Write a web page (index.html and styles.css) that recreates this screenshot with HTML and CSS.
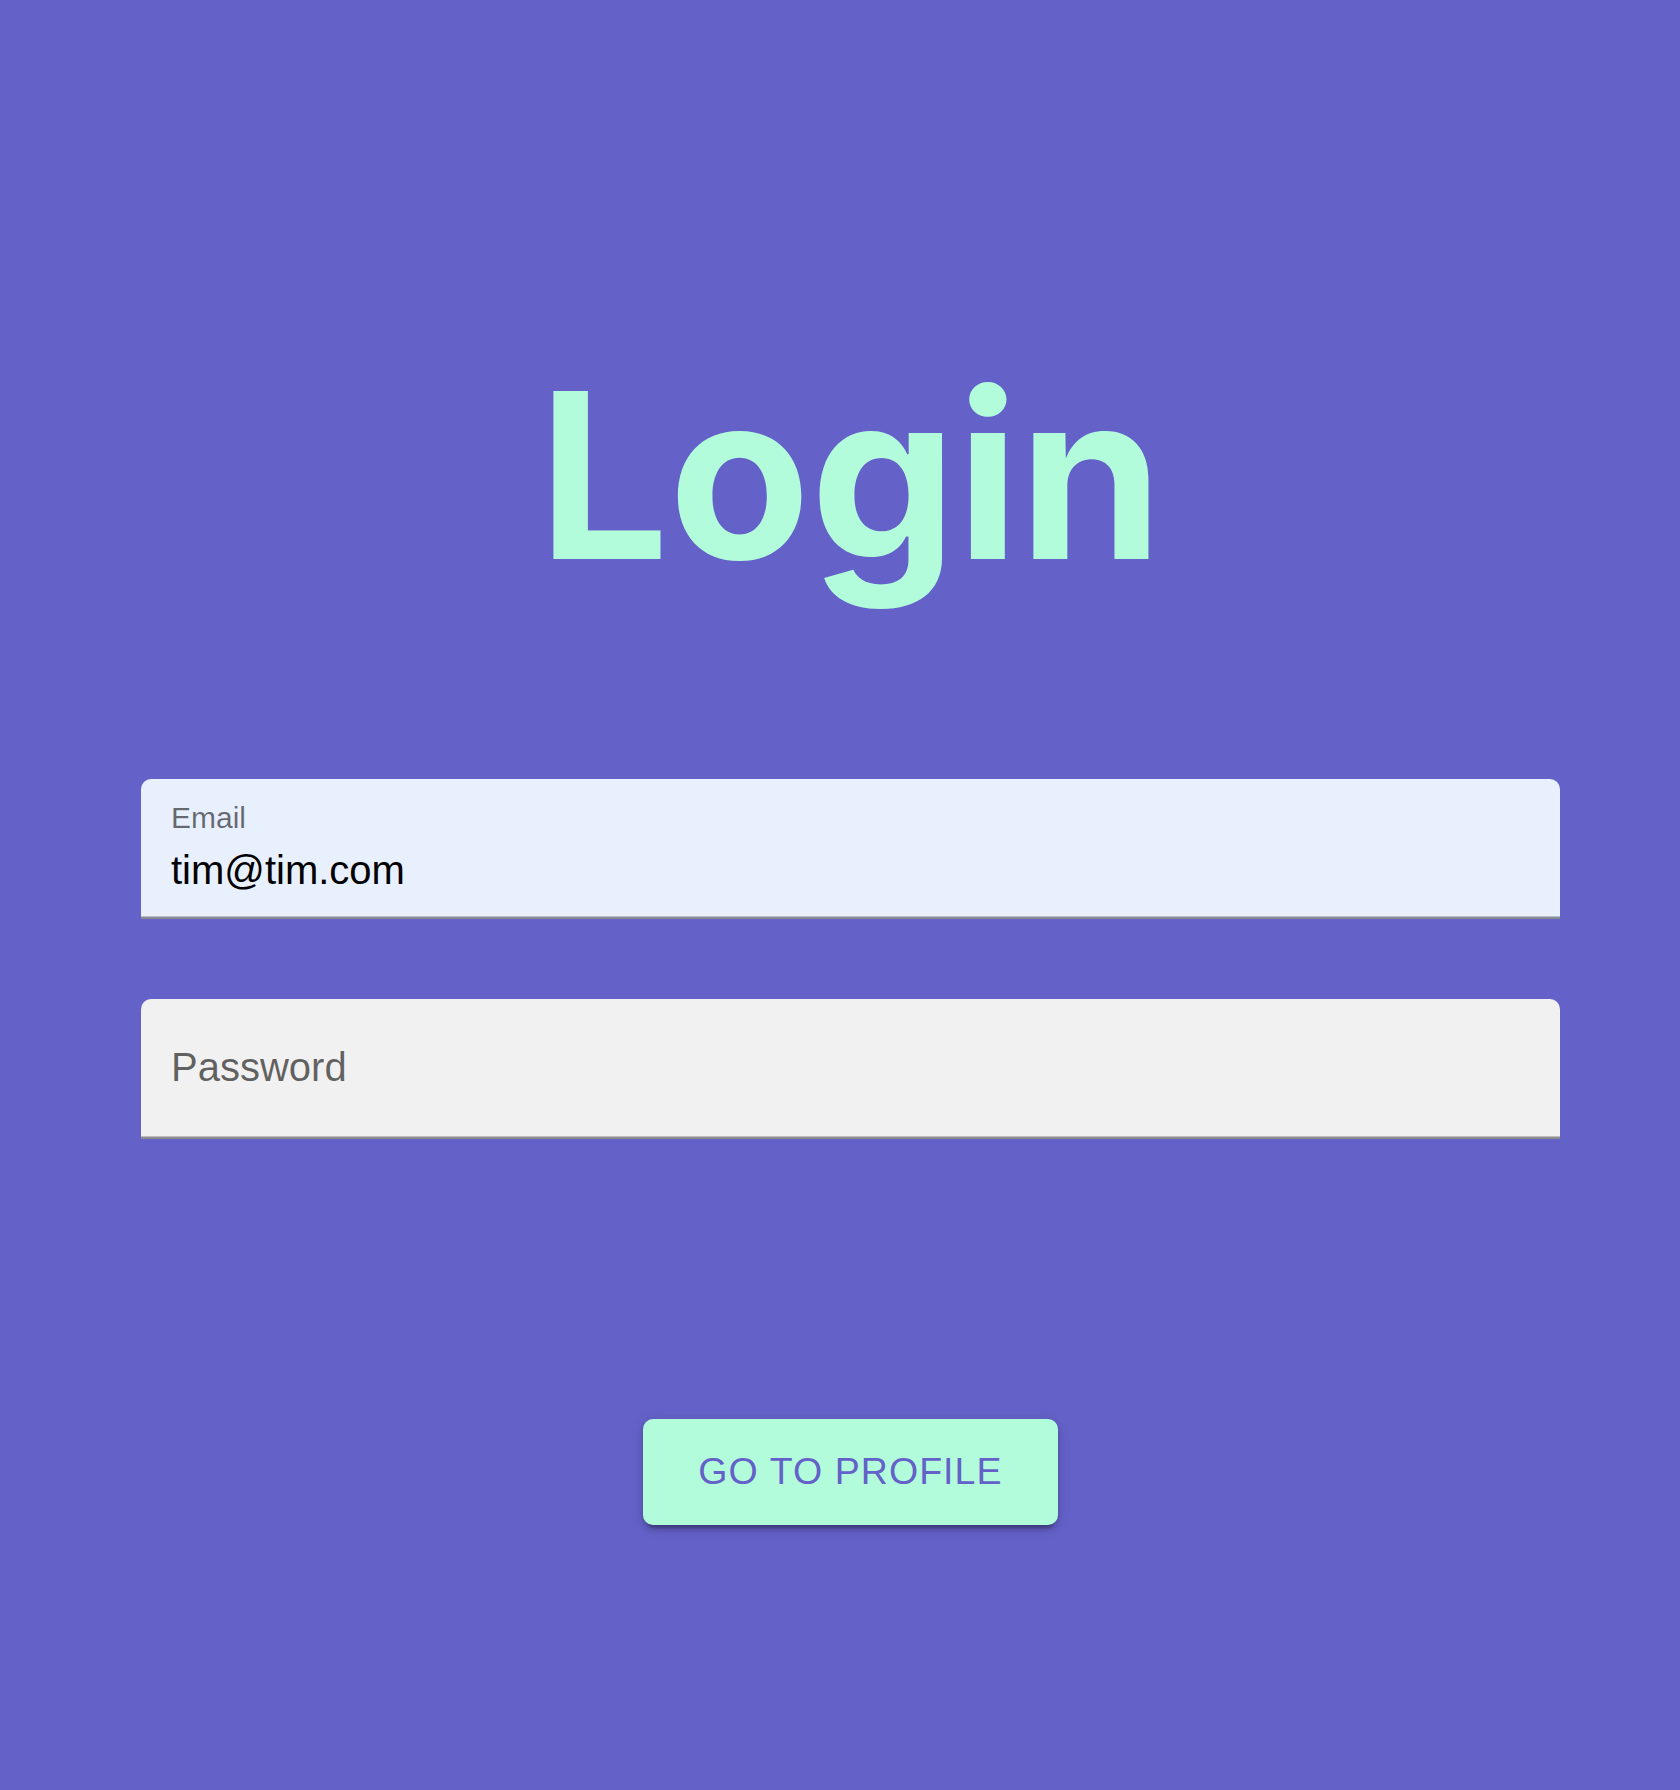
FILE: index.html
```html
<!DOCTYPE html>
<html lang="en">
<head>
<meta charset="utf-8">
<title>Login</title>
<link rel="stylesheet" href="styles.css">
</head>
<body>
<main class="page">
  <h1 class="title">Login</h1>
  <form class="form">
    <div class="field field--autofill">
      <label class="field-label field-label--shrunk" for="email">Email</label>
      <input class="field-input" id="email" type="text" value="tim@tim.com">
    </div>
    <div class="field">
      <label class="field-label" for="password">Password</label>
      <input class="field-input" id="password" type="password">
    </div>
  </form>
  <div class="actions">
    <button class="btn" type="button">Go to profile</button>
  </div>
</main>
</body>
</html>
```

FILE: styles.css
```css
html, body {
  margin: 0;
  padding: 0;
  background: #6461c8;
}

body {
  min-height: 1790px;
  font-family: "Liberation Sans", Arial, sans-serif;
}

.page {
  width: 1419px;
  margin-left: 141px;
  padding-top: 360px;
  display: flex;
  flex-direction: column;
}

.title {
  margin: 0;
  font-family: Inter, Roboto, sans-serif;
  font-weight: 700;
  font-size: 231px;
  line-height: 1;
  text-align: center;
  color: #b2fcdc;
  letter-spacing: 0;
}

.form {
  margin-top: 188px;
  display: flex;
  flex-direction: column;
  gap: 80px;
}

.field {
  position: relative;
  height: 140px;
  box-sizing: border-box;
  padding: 67.5px 30px 25px;
  background: #f1f1f1;
  border-radius: 10px 10px 0 0;
  box-shadow: inset 0 -2.5px 0 rgba(0, 0, 0, 0.42);
}

.field--autofill {
  background: #e8f0fe;
}

.field-label {
  position: absolute;
  left: 30px;
  top: 48px;
  font-size: 40px;
  line-height: 1;
  color: rgba(0, 0, 0, 0.6);
}

.field-label--shrunk {
  top: 24px;
  font-size: 30px;
  color: rgba(0, 0, 0, 0.56);
}

.field-input {
  display: block;
  width: 100%;
  height: 47.5px;
  margin: 0;
  padding: 0;
  border: 0;
  outline: 0;
  background: transparent;
  font-family: "Liberation Sans", Arial, sans-serif;
  font-size: 40px;
  color: #000;
}

.actions {
  margin-top: 280px;
  display: flex;
  justify-content: center;
}

.btn {
  padding: 20px 55px;
  border: 0;
  border-radius: 10px;
  background: #b2fcdc;
  color: #6461c8;
  font-family: "Liberation Sans", Arial, sans-serif;
  font-size: 37.5px;
  line-height: 1.75;
  letter-spacing: 1.07px;
  text-transform: uppercase;
  box-shadow: 0 7.5px 2.5px -5px rgba(0, 0, 0, 0.2),
              0 5px 5px 0 rgba(0, 0, 0, 0.14),
              0 2.5px 12.5px 0 rgba(0, 0, 0, 0.12);
  cursor: pointer;
}
```
